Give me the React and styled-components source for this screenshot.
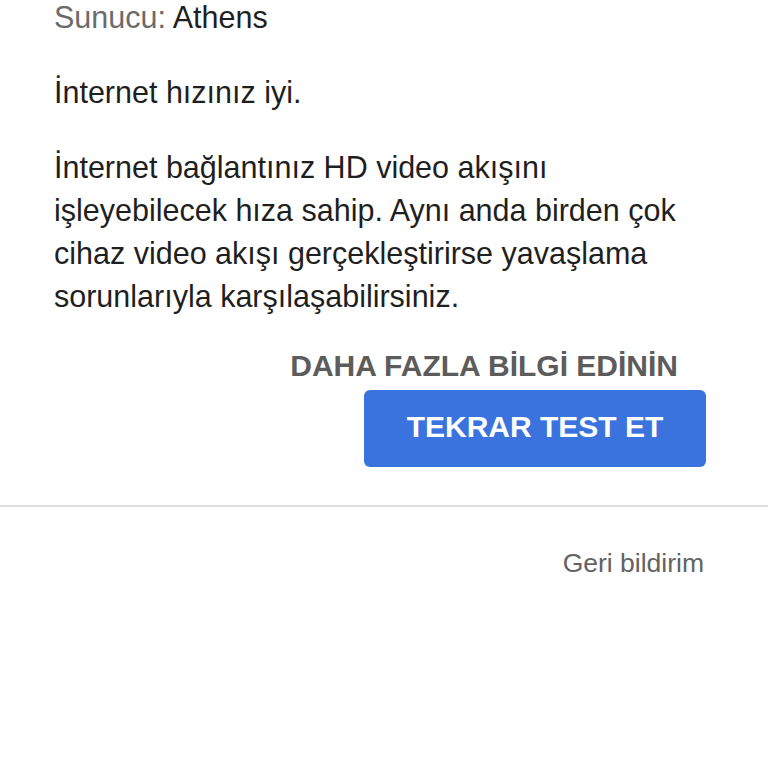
import React from 'react';
import styled, { createGlobalStyle } from 'styled-components';

const GlobalStyle = createGlobalStyle`
  html, body {
    margin: 0;
    padding: 0;
    background: #ffffff;
  }
  body {
    font-family: "Liberation Sans", Arial, Helvetica, sans-serif;
    -webkit-font-smoothing: antialiased;
  }
`;

const Page = styled.div`
  width: 768px;
  min-height: 768px;
  background: #fff;
  overflow: hidden;
`;

const Content = styled.div`
  padding: 0 56px 0 54px;
  margin-top: -4px;
`;

const Para = styled.p`
  margin: 0 0 32px;
  font-size: 30.5px;
  line-height: 43px;
  color: #1f1f1f;
`;

const Label = styled.span`
  color: #6b6b6b;
`;

const Actions = styled.div`
  display: flex;
  flex-direction: column;
  align-items: flex-end;
  padding-right: 62px;
  margin-top: -8px;
`;

const TextButton = styled.button`
  border: none;
  background: none;
  padding: 0 28px;
  height: 48px;
  font-family: inherit;
  font-size: 30px;
  font-weight: 700;
  color: #5c5c5c;
  cursor: pointer;
`;

const PrimaryButton = styled.button`
  width: 342px;
  height: 77px;
  padding: 0 0 4px;
  border: none;
  border-radius: 6px;
  background: #3a72de;
  color: #fff;
  font-family: inherit;
  font-size: 30px;
  font-weight: 700;
  cursor: pointer;
`;

const Divider = styled.hr`
  margin: 38px 0 0;
  border: none;
  border-top: 2px solid #dedede;
`;

const Footer = styled.div`
  display: flex;
  justify-content: flex-end;
  padding: 38px 64px 0 0;
`;

const FooterLink = styled.a`
  font-size: 26.5px;
  line-height: 36px;
  color: #636363;
  text-decoration: none;
`;

export default function App() {
  return (
    <Page>
      <GlobalStyle />
      <Content>
        <Para>
          <Label>Sunucu: </Label>Athens
        </Para>
        <Para>İnternet hızınız iyi.</Para>
        <Para>
          İnternet bağlantınız HD video akışını işleyebilecek hıza sahip. Aynı anda birden çok cihaz video akışı
          gerçekleştirirse yavaşlama sorunlarıyla karşılaşabilirsiniz.
        </Para>
      </Content>
      <Actions>
        <TextButton>DAHA FAZLA BİLGİ EDİNİN</TextButton>
        <PrimaryButton>TEKRAR TEST ET</PrimaryButton>
      </Actions>
      <Divider />
      <Footer>
        <FooterLink href="#">Geri bildirim</FooterLink>
      </Footer>
    </Page>
  );
}
